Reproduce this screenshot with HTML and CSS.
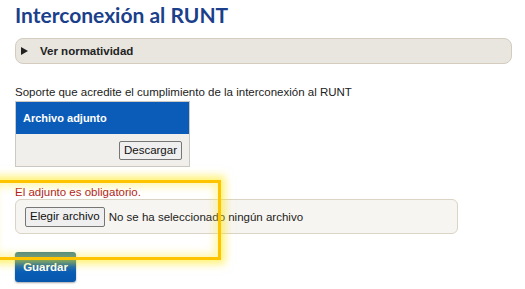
FILE: index.html
```html
<!DOCTYPE html>
<html>
	<head>
		<meta charset="UTF-8">
		<title>Interconexión al RUNT</title>
		<link rel="stylesheet" href="styles.css">
	</head>
	<body>
		<div id="page">
			<h1 class="title">Interconexión al RUNT</h1>
			<details class="norm">
				<summary>Ver normatividad</summary>
			</details>

			<p class="label">Soporte que acredite el cumplimiento de la interconexión al RUNT</p>
			<table class="adjunto">
				<tr><th>Archivo adjunto</th></tr>
				<tr><td><button class="btn">Descargar</button></td></tr>
			</table>

			<p class="error">El adjunto es obligatorio.</p>
			<div class="file-box">
				<button class="btn">Elegir archivo</button>
				<span class="file-name">No se ha seleccionado ningún archivo</span>
			</div>

			<button class="save">Guardar</button>

			<div class="highlight"></div>
		</div>
	</body>
</html>
```

FILE: styles.css
```css
body{margin: 0; background: #fff; font-family: "Liberation Sans", Arial, sans-serif; color: #222;}
#page{position: relative; padding: 0 0 0 15px; height: 289px; overflow: hidden;}
.title{margin: 2px 0 0; font-family: Lato, "Liberation Sans", sans-serif; font-size: 21px; line-height: 26px; color: #1b3f8b; font-weight: bold;}

.norm{margin: 10px 13px 0 0; background: #e9e6e0; border: 1px solid #d3ccbf; border-radius: 8px; height: 24px;}
.norm summary{list-style: none; font-size: 11.5px; font-weight: bold; line-height: 24px; padding-left: 24px; position: relative; cursor: pointer;}
.norm summary::-webkit-details-marker{display: none;}
.norm summary::before{content: ""; position: absolute; left: 5px; top: 8px; border-left: 7px solid #222; border-top: 4px solid transparent; border-bottom: 4px solid transparent;}

.label{margin: 21px 0 0; font-size: 11.5px; line-height: 14px;}
.adjunto{margin-top: 2px; width: 175px; border-collapse: collapse; border: 1px solid #cbc8c2;}
.adjunto th{background: #0b5cb8; color: #fff; text-align: left; font-size: 11px; height: 32px; padding: 0 0 0 7px;}
.adjunto td{background: #f1efeb; height: 32px; text-align: right; padding: 0 7px 0 0;}

.btn{font-family: "Liberation Sans", Arial, sans-serif; font-size: 11.5px; color: #111; background: #efefef; border: 1px solid #767676; border-radius: 2px; padding: 1px 4px; height: 19px; line-height: 15px;}
.file-box .btn{height: 20px;}

.error{margin: 18px 0 0; font-size: 11.5px; line-height: 14px; color: #b01c1c;}
.file-box{display: flex; align-items: center; gap: 4px; margin: 0 67px 0 0; height: 33px; padding: 0 9px; background: #f7f5f1; border: 1px solid #dbd3c4; border-radius: 6px;}
.file-name{font-size: 11.5px; color: #222;}

.save{display: block; margin-top: 18px; width: 61px; height: 30px; border: none; border-radius: 3px; background: linear-gradient(#3f7f86 0%, #0a60bb 45%, #0757ad); color: #fff; font-family: "Liberation Sans", Arial, sans-serif; font-weight: bold; font-size: 11.5px; box-shadow: 0 1px 2px rgba(0,0,0,.35);}

.highlight{position: absolute; left: -10px; top: 180px; width: 225px; height: 74px; border: 3px solid #ffc400; box-shadow: 0 0 8px 4px rgba(255,232,0,.55), inset 0 0 8px 3px rgba(255,236,60,.45); pointer-events: none;}
```
